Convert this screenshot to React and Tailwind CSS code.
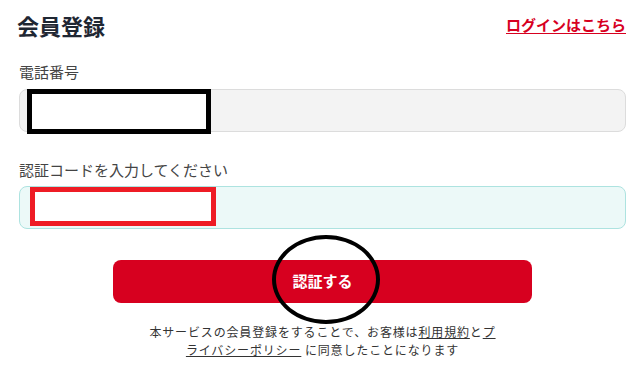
const font = {
  fontFamily: '"Noto Sans CJK JP", "Noto Sans", sans-serif',
};

const App = () => {
  return (
    <div
      className="w-[643px] h-[366px] bg-white pt-[10px] pl-[19px] pr-[17px] overflow-hidden"
      style={font}
    >
      <div className="flex items-center justify-between h-[30px]">
        <h1 className="text-[22px] font-bold leading-[30px] text-[#1f2733] -ml-[2px]">
          会員登録
        </h1>
        <a
          href="#"
          className="text-[15px] font-bold leading-[20px] text-[#d7001f] underline underline-offset-2"
        >
          ログインはこちら
        </a>
      </div>

      <form className="flex flex-col">
        <label className="mt-[22px] text-[15px] leading-[20px] text-[#444]">
          電話番号
        </label>
        <div className="relative mt-[7px] h-[43px] rounded-[8px] border border-[#dcdcdc] bg-[#f3f3f3]">
          <div className="absolute left-[7px] -top-px w-[184px] h-[45px] border-[5px] border-black bg-white" />
        </div>

        <label className="mt-[28px] text-[15px] leading-[20px] text-[#444]">
          認証コードを入力してください
        </label>
        <div className="relative mt-[6px] h-[43px] rounded-[8px] border border-[#ade3e0] bg-[#ecf9f8]">
          <div className="absolute left-[10px] top-0 w-[186px] h-[39px] border-[5px] border-[#ee1c25] bg-white" />
        </div>

        <div className="relative mt-[31px] mx-auto w-[419px]">
          <button
            type="button"
            className="w-full h-[43px] rounded-[8px] bg-[#d7001f] text-white text-[15px] font-bold"
          >
            認証する
          </button>
          <div className="absolute left-[159px] -top-[25px] w-[108px] h-[89px] rounded-[50%] border-[4px] border-black pointer-events-none" />
        </div>

        <p className="mt-[20px] mx-auto w-[352px] text-center text-[12px] leading-[18px] tracking-[0.85px] text-[#333]">
          本サービスの会員登録をすることで、お客様は
          <a href="#" className="underline">
            利用規約
          </a>
          と
          <a href="#" className="underline">
            プライバシーポリシー
          </a>{" "}
          に同意したことになります
        </p>
      </form>
    </div>
  );
};

export default App;
